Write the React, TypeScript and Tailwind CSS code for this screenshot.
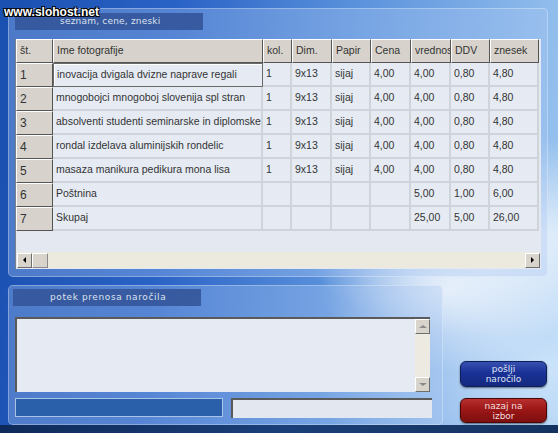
import React from "react";

const cols = [
  { label: "Ime fotografije", w: 210 },
  { label: "kol.", w: 29 },
  { label: "Dim.", w: 40 },
  { label: "Papir", w: 39 },
  { label: "Cena", w: 40 },
  { label: "vrednost", w: 40 },
  { label: "DDV", w: 39 },
  { label: "znesek", w: 49 },
];

const photo = (name: string) => [name, "1", "9x13", "sijaj", "4,00", "4,00", "0,80", "4,80"];

const rows = [
  photo("inovacija dvigala dvizne naprave regali"),
  photo("mnogobojci mnogoboj slovenija spl stran"),
  photo("absolventi studenti seminarske in diplomske naloge"),
  photo("rondal izdelava aluminijskih rondelic"),
  photo("masaza manikura pedikura mona lisa"),
  ["Poštnina", "", "", "", "", "5,00", "1,00", "6,00"],
  ["Skupaj", "", "", "", "", "25,00", "5,00", "26,00"],
];

function ArrowBtn({ dir }: { dir: "left" | "right" | "up" | "down" }) {
  const tri = {
    left: "border-y-[3px] border-y-transparent border-r-[3px] border-r-black",
    right: "border-y-[3px] border-y-transparent border-l-[3px] border-l-black",
    up: "border-x-[4px] border-x-transparent border-b-[3px] border-b-[#8a8a8a]",
    down: "border-x-[4px] border-x-transparent border-t-[3px] border-t-[#8a8a8a]",
  }[dir];
  return (
    <div className="flex h-[15px] w-[15px] items-center justify-center border border-t-white border-l-white border-r-[#6e6e6e] border-b-[#6e6e6e] bg-[#d8d4cc]">
      <div className={`h-0 w-0 ${tri}`} />
    </div>
  );
}

function Title({ text, tracking }: { text: string; tracking?: boolean }) {
  return (
    <div
      className={`flex h-[17px] w-[188px] items-center bg-[#34559a]/90 pt-[1px] font-['DejaVu_Sans',sans-serif] text-[9px] text-[#dce3ee] ${
        tracking ? "pl-[37px] tracking-[0.6px]" : "pl-[45px] tracking-[0.2px]"
      }`}
    >
      {text}
    </div>
  );
}

export default function App() {
  return (
    <div className="relative flex h-[433px] w-[558px] flex-col overflow-hidden font-['Liberation_Sans',Arial,sans-serif] [background-image:radial-gradient(ellipse_at_92%_55%,rgba(255,255,255,0.8),transparent_30%),radial-gradient(ellipse_at_80%_67%,rgba(255,255,255,0.65),transparent_20%),radial-gradient(ellipse_at_98%_85%,rgba(225,240,255,0.7),transparent_30%),linear-gradient(95deg,#1a50b0_0%,#2a63c6_30%,#5b92dc_60%,#9cc6f0_100%)]">
      <div className="absolute left-[4px] top-[3px] font-['Liberation_Sans',Arial,sans-serif] text-[12px] font-bold text-white [text-shadow:1px_1px_0_#000,-1px_-1px_0_#000,1px_-1px_0_#000,-1px_1px_0_#000]">
        www.slohost.net
      </div>

      {/* upper panel */}
      <div className="ml-[8px] mt-[8px] flex h-[269px] w-[540px] flex-col rounded-[5px] border border-white/30 bg-[#a9c6f0]/35 pl-[6px] pt-[4px]">
        <Title text="seznam, cene, zneski" />
        <div className="mt-[9px] flex h-[230px] w-[526px] flex-col border-l border-[#7a7f88] bg-[#e4e9f1] text-[10.5px] text-[#333]">
          <div className="flex h-[24px]">
            <div className="flex w-[37px] items-center border border-t-white border-l-white border-r-[#555] border-b-[#555] bg-[#d7d3cc] pl-[3px]">
              št.
            </div>
            {cols.map((c) => (
              <div
                key={c.label}
                style={{ width: c.w }}
                className="flex items-center overflow-hidden whitespace-nowrap border border-t-white border-l-white border-r-[#555] border-b-[#555] bg-[#d7d3cc] pl-[3px]"
              >
                {c.label}
              </div>
            ))}
          </div>
          {rows.map((r, i) => (
            <div key={i} className="flex h-[24px]">
              <div className="flex w-[37px] items-center border border-t-white border-l-white border-r-[#555] border-b-[#555] bg-[#d7d3cc] pl-[3px] text-[12px]">
                {i + 1}
              </div>
              {r.map((v, j) => (
                <div
                  key={j}
                  style={{ width: cols[j].w }}
                  className={`flex items-center overflow-hidden whitespace-nowrap bg-[#e6ebf3] pl-[3px] ${
                    i === 0 && j === 0
                      ? "border border-[#6a6a6a] shadow-[inset_1px_1px_0_#fff]"
                      : "border-b-2 border-r-2 border-[#cfd3da]"
                  }`}
                >
                  {v}
                </div>
              ))}
            </div>
          ))}
          <div className="flex-1" />
          <div className="mb-[1px] ml-[1px] flex h-[16px] w-[523px] items-center justify-between bg-[#ece9df]">
            <div className="flex">
              <ArrowBtn dir="left" />
              <div className="h-[15px] w-[16px] border border-t-white border-l-white border-r-[#8a8a8a] border-b-[#8a8a8a] bg-[#d8d4cc]" />
            </div>
            <ArrowBtn dir="right" />
          </div>
        </div>
      </div>

      {/* lower row */}
      <div className="mt-[8px] flex h-[140px] pl-[8px]">
        <div className="flex h-[140px] w-[435px] flex-col rounded-[5px] border border-white/30 bg-[#a9c6f0]/35 pl-[4px] pt-[3px]">
          <Title text="potek prenosa naročila" tracking />
          <div className="ml-[2px] mt-[11px] flex h-[75px] w-[415px] border-l-2 border-t-2 border-[#5a5a5a] bg-[#e6ebf3]">
            <div className="flex-1" />
            <div className="flex w-[15px] flex-col justify-between bg-[#edeae2]">
              <ArrowBtn dir="up" />
              <ArrowBtn dir="down" />
            </div>
          </div>
          <div className="ml-[2px] mt-[6px] flex gap-[8px]">
            <div className="h-[19px] w-[208px] border border-[#a9c3e6] bg-[#2a5fa9]" />
            <div className="h-[20px] w-[201px] border-l-2 border-t-2 border-[#5a5a5a] bg-[#e3e8f0]" />
          </div>
        </div>
        <div className="ml-[17px] flex w-[87px] flex-col justify-end gap-[11px] pb-[2px]">
          <button className="flex h-[26px] flex-col items-center justify-center rounded-[6px] border border-[#0d1f5a] bg-[linear-gradient(180deg,#3650b0_0%,#1a3196_45%,#142a80_100%)] font-['DejaVu_Sans',sans-serif] text-[9px] leading-[10px] text-[#dfe6f5] shadow-[0_1px_2px_rgba(0,0,0,0.5)]">
            <span>pošlji</span>
            <span>naročilo</span>
          </button>
          <button className="flex h-[25px] flex-col items-center justify-center rounded-[6px] border border-[#4a0606] bg-[linear-gradient(180deg,#b83030_0%,#9c1717_45%,#7e0f0f_100%)] font-['DejaVu_Sans',sans-serif] text-[9px] leading-[10px] text-[#f2dede] shadow-[0_1px_2px_rgba(0,0,0,0.5)]">
            <span>nazaj na</span>
            <span>izbor</span>
          </button>
        </div>
      </div>

      <div className="mt-auto h-[8px] bg-[linear-gradient(90deg,#0e2a5a,#1a3f78,#14325f)]" />
    </div>
  );
}
